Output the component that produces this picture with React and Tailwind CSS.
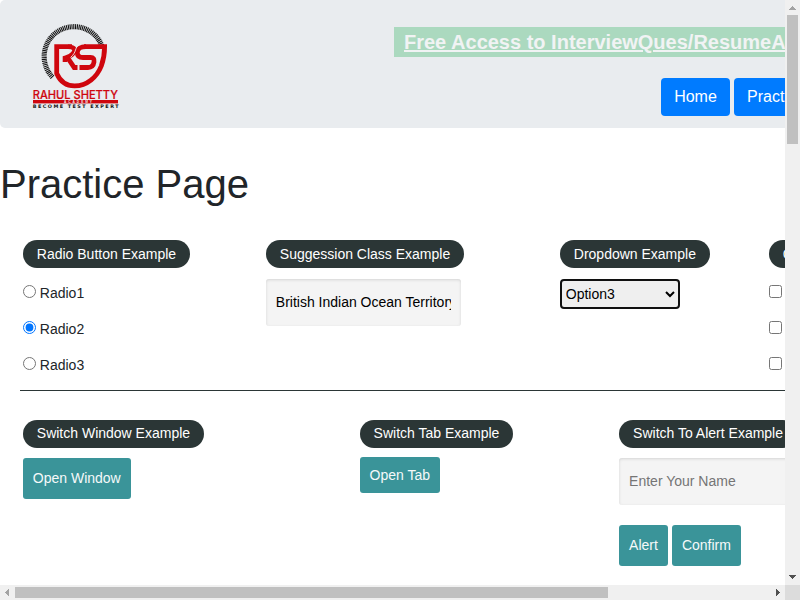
import React from "react";

const TICKS = Array.from({ length: 61 }, (_, i) => 137 + i * 3.4);

function Logo() {
  return (
    <svg className="block h-[88px] w-[88px]" viewBox="32 22 88 88" role="img" aria-label="Rahul Shetty Academy">
      <g stroke="#111" strokeWidth="1.1">
        {TICKS.map((deg) => (
          <line key={deg} x1="101.3" y1="56.5" x2="106.4" y2="56.5" transform={`rotate(${deg} 74 56.5)`} />
        ))}
      </g>
      <g fill="none" stroke="#cf060e">
        <path
          d="M72 46.7H56.700V73.500C60 81 66 85.900 74.500 85.900C87 86 97 77 101.300 66C103.600 59.500 104.600 53 104.600 46.700H84"
          strokeWidth="4.800"
        />
        <path d="M68 46.700C75.500 46.700 75.500 50.500 73 53.500C71 56 68.500 56.800 65 58V62" strokeWidth="4.600" />
        <path d="M67.500 57.500L74.200 67.500H77.500" strokeWidth="4.800" />
        <path
          d="M86 46.700C80.500 46.700 77.300 49 77.300 52.500C77.300 56 79.500 57.500 83 57.500H90.500C93.500 57.500 94.400 59.200 94 62C93.500 65.500 91.500 67.500 88 67.500H79.500"
          strokeWidth="4.800"
        />
      </g>
      <path d="M79 44.500C74.500 47.500 77 52 70.500 57.500" fill="none" stroke="#e9ecef" strokeWidth="0.900" />
      <text x="32.700" y="99" textLength="85.300" lengthAdjust="spacingAndGlyphs" fontFamily="Inter, sans-serif" fontWeight="500" fontSize="11.500" fill="#cf060e" stroke="#cf060e" strokeWidth="0.200">RAHUL SHETTY</text>
      <rect x="33" y="100" width="85" height="3.400" fill="#cf060e" />
      <text x="64" y="102.900" textLength="28" fontFamily="Liberation Sans, sans-serif" fontWeight="700" fontSize="3.200" fill="#eee">ACADEMY</text>
      <text x="32.700" y="108" textLength="85.800" fontFamily="DejaVu Sans, sans-serif" fontWeight="700" fontSize="4.900" fill="#111">BECOME TEST EXPERT</text>
    </svg>
  );
}

function Legend({ children }) {
  return (
    <div className="flex h-7 w-max items-center rounded-full bg-[#2b3636] px-[14px] whitespace-nowrap text-white">
      {children}
    </div>
  );
}

function Choice({ type, label, checked }) {
  return (
    <label className="flex h-9 items-start whitespace-nowrap">
      <input type={type} name={type} defaultChecked={checked} className="mt-[6px] mr-1 h-[13px] w-[13px] shrink-0" />
      <span className="mt-1 leading-[21px]">{label}</span>
    </label>
  );
}

function ActionButton({ children, className = "h-[41px]" }) {
  return (
    <button className={`${className} shrink-0 rounded-[3px] bg-[#3a9499] px-[10px] whitespace-nowrap text-[#f5f9f9]`}>
      {children}
    </button>
  );
}

const FIELD =
  "block h-[47px] rounded-[3px] bg-[#f4f4f4] px-[10px] pb-[2px] text-black shadow-[inset_0_1px_3px_#d4d4d4] outline-none placeholder:text-[#757575]";

export default function App() {
  return (
    <div className="grid h-[600px] w-[800px] grid-cols-[785px_15px] grid-rows-[585px_15px] overflow-hidden bg-white font-['Liberation_Sans',Arial,sans-serif] text-[14px] text-[#212529]">
      <main className="min-w-0 overflow-hidden">
        <header className="flex h-32 w-[1000px] items-start rounded-[5px] bg-[#e9ecef] pl-8 pt-[22px]">
          <Logo />
          <div className="ml-[274px] mt-[5px] w-[606px] shrink-0">
            <a className="flex h-[30px] items-center bg-[#abd9bf] pl-[10px] text-[20px] font-bold whitespace-nowrap text-[#f1f3f4] underline">
              Free Access to InterviewQues/ResumeAssistance/Material
            </a>
            <nav className="mt-[21px] ml-[267px] flex gap-1 text-[16px] text-white">
              <button className="h-[38px] w-[69px] shrink-0 rounded bg-[#007bff]">Home</button>
              <button className="h-[38px] shrink-0 rounded bg-[#007bff] px-[13px]">Practice</button>
            </nav>
          </div>
        </header>

        <h1 className="mt-8 h-12 text-[40px] leading-[48px]">Practice Page</h1>

        <section className="mt-8 flex h-[150px] w-[1000px] pl-[22.8px]">
          <div className="w-[243px] shrink-0">
            <Legend>Radio Button Example</Legend>
            <div className="mt-[11px]">
              <Choice type="radio" label="Radio1" />
              <Choice type="radio" label="Radio2" checked />
              <Choice type="radio" label="Radio3" />
            </div>
          </div>
          <div className="w-[294px] shrink-0">
            <Legend>Suggession Class Example</Legend>
            <input className={`${FIELD} mt-[11px] w-[195px]`} defaultValue="British Indian Ocean Territory" />
          </div>
          <div className="w-[209px] shrink-0">
            <Legend>Dropdown Example</Legend>
            <select
              defaultValue="Option3"
              className="mt-[11px] block h-[30px] w-[120px] appearance-auto rounded-[4px] border-2 border-[#101010] bg-[#efefef] text-black outline-none"
            >
              <option>Option1</option>
              <option>Option2</option>
              <option>Option3</option>
            </select>
          </div>
          <div className="shrink-0">
            <Legend>Checkbox Example</Legend>
            <div className="mt-[11px]">
              <Choice type="checkbox" label="Option1" />
              <Choice type="checkbox" label="Option2" />
              <Choice type="checkbox" label="Option3" />
            </div>
          </div>
        </section>

        <hr className="ml-5 h-px w-[980px] border-0 bg-[#2b3636]" />

        <section className="mt-[29px] flex w-[1000px] pl-[22.8px]">
          <div className="w-[336.8px] shrink-0">
            <Legend><span className="-mt-0.5">Switch Window Example</span></Legend>
            <ActionButton className="mt-[10px] h-[41px]">Open Window</ActionButton>
          </div>
          <div className="w-[259.5px] shrink-0">
            <Legend><span className="-mt-0.5">Switch Tab Example</span></Legend>
            <ActionButton className="mt-[9px] h-[36px]">Open Tab</ActionButton>
          </div>
          <div className="shrink-0">
            <Legend><span className="-mt-0.5">Switch To Alert Example</span></Legend>
            <input className={`${FIELD} mt-[10px] w-[195px]`} placeholder="Enter Your Name" />
            <div className="mt-5 flex gap-1">
              <ActionButton>Alert</ActionButton>
              <ActionButton>Confirm</ActionButton>
            </div>
          </div>
        </section>
      </main>

      <div className="flex flex-col bg-[#f0f0f0]">
        <svg className="h-[15px] w-[15px]" viewBox="0 0 15 15" shapeRendering="crispEdges"><path d="M4 10L7.500 6L11 10Z" fill="#a3a3a3" /></svg>
        <div className="ml-[2px] h-[129px] w-[11px] bg-[#c0c0c0]" />
        <svg className="mt-auto h-[15px] w-[15px]" viewBox="0 0 15 15" shapeRendering="crispEdges"><path d="M4 5L11 5L7.500 9Z" fill="#505050" /></svg>
      </div>
      <div className="flex items-center bg-[#f0f0f0]">
        <svg className="h-[15px] w-[15px]" viewBox="0 0 15 15" shapeRendering="crispEdges"><path d="M9 4V11L5 7.500Z" fill="#a3a3a3" /></svg>
        <div className="h-[11px] w-[593px] bg-[#c0c0c0]" />
        <svg className="ml-auto h-[15px] w-[15px]" viewBox="0 0 15 15" shapeRendering="crispEdges"><path d="M6 4V11L10 7.500Z" fill="#505050" /></svg>
      </div>
      <div className="bg-[#dcdcdc]" />
    </div>
  );
}
